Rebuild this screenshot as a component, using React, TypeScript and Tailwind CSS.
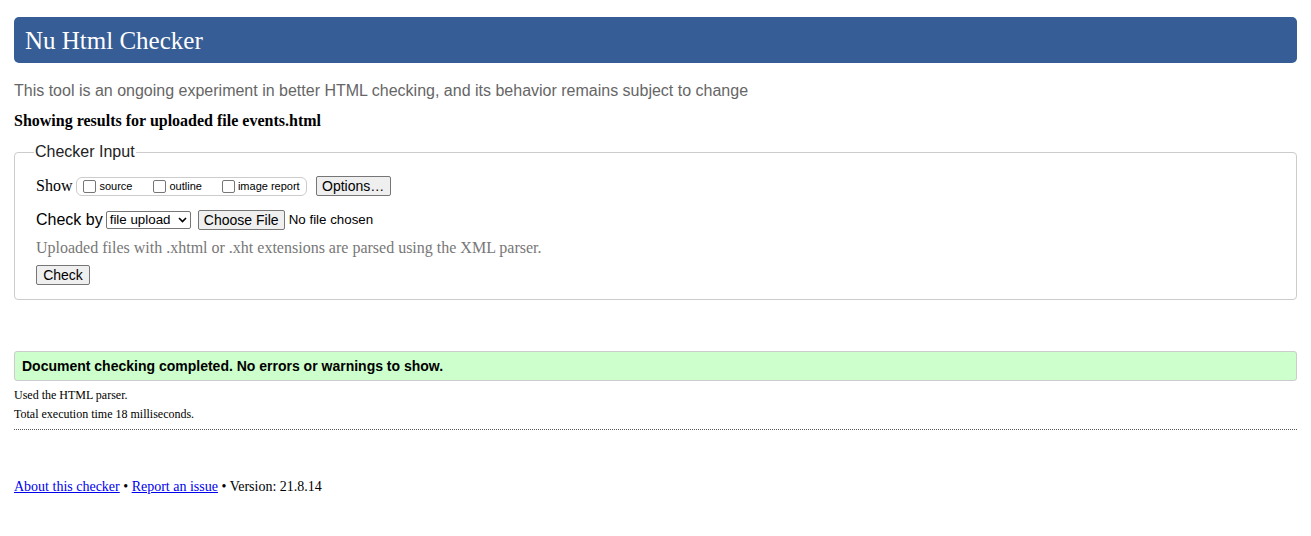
import React from "react";

const serif = "font-['Liberation_Serif',_'Times_New_Roman',_serif]";
const sans = "font-['Liberation_Sans',_Arial,_sans-serif]";

function Checkbox({ label, className = "" }: { label: string; className?: string }) {
  return (
    <label className={`flex items-center ${className}`}>
      <span className="inline-block h-[13px] w-[13px] rounded-[2px] border border-[#767676] bg-white" />
      <span className={`ml-[3px] text-[11px] leading-[13px] text-black ${sans}`}>{label}</span>
    </label>
  );
}

function Btn({ children, className = "" }: { children: React.ReactNode; className?: string }) {
  return (
    <button
      type="button"
      className={`flex h-[20px] shrink-0 items-center justify-center whitespace-nowrap rounded-[2px] border border-[#767676] bg-[#efefef] px-[6px] text-[13.33px] text-black ${sans} ${className}`}
    >
      {children}
    </button>
  );
}

export default function App() {
  return (
    <div className="min-h-[536px] bg-white px-[14px] pt-[17px] text-black">
      <header className="flex h-[46px] items-center rounded-[5px] bg-[#365d95] pl-[11px]">
        <h1 className={`text-[25px] leading-none font-normal text-white ${serif}`}>Nu Html Checker</h1>
      </header>

      <p className={`mt-[19px] h-[18px] text-[16px] leading-[18px] text-[#666666] ${sans}`}>
        This tool is an ongoing experiment in better HTML checking, and its behavior remains subject to change
      </p>

      <p className={`mt-[12px] h-[18px] text-[16px] leading-[18px] font-bold ${serif}`}>
        Showing results for uploaded file events.html
      </p>

      <fieldset className="mt-[13px] rounded-[4px] border border-[#cccccc] pr-[20px] pb-[14px] pl-[21px]">
        <legend className={`ml-[-2px] px-[1px] text-[16px] leading-[18px] text-[#222] ${sans}`}>Checker Input</legend>

        <div className="mt-[15px] flex h-[20px] items-center">
          <span className={`text-[16px] ${serif}`}>Show</span>
          <div className="ml-[4px] flex h-[19px] items-center rounded-[6px] border border-[#cccccc] pr-[6px] pl-[6px]">
            <Checkbox label="source" />
            <Checkbox label="outline" className="ml-[21px]" />
            <Checkbox label="image report" className="ml-[20px]" />
          </div>
          <Btn className="ml-[9px] h-[19px] w-[75px] text-[14px]">Options…</Btn>
        </div>

        <div className="mt-[14px] flex h-[20px] items-center">
          <span className={`text-[16px] ${sans}`}>Check by</span>
          <div
            className={`ml-[3px] flex h-[18px] w-[85px] shrink-0 items-center justify-between rounded-[2px] border border-[#767676] bg-white pr-[3px] pl-[3px] text-[13.33px] ${sans}`}
          >
            <span>file upload</span>
            <svg width="9" height="6" viewBox="0 0 9 6" fill="none">
              <path d="M1 1l3.5 3.5L8 1" stroke="#000" strokeWidth="1.6" />
            </svg>
          </div>
          <Btn className="ml-[7px] w-[87px] text-[14px]">Choose File</Btn>
          <span className={`ml-[4px] whitespace-nowrap text-[13.33px] ${sans}`}>No file chosen</span>
        </div>

        <p className={`mt-[9px] h-[18px] text-[16px] leading-[18px] text-[#777777] ${serif}`}>
          Uploaded files with .xhtml or .xht extensions are parsed using the XML parser.
        </p>

        <Btn className="mt-[8px] w-[54px] text-[14px]">Check</Btn>
      </fieldset>

      <div
        className={`mt-[51px] flex h-[30px] items-center rounded-[3px] border border-[#cccccc] bg-[#ccffcc] pl-[7px] text-[14px] font-bold ${sans}`}
      >
        Document checking completed. No errors or warnings to show.
      </div>

      <div className={`mt-[5px] text-[12px] ${serif}`}>
        <p className="h-[19px] leading-[19px]">Used the HTML parser.</p>
        <p className="h-[19px] leading-[19px]">Total execution time 18 milliseconds.</p>
      </div>

      <div className="mt-[5px] border-t border-dotted border-[#555]" />

      <p className={`mt-[48px] text-[14px] leading-[18px] ${serif}`}>
        <a href="#" className="text-[#0000ee] underline">About this checker</a>
        {" • "}
        <a href="#" className="text-[#0000ee] underline">Report an issue</a>
        {" • Version: 21.8.14"}
      </p>
    </div>
  );
}
